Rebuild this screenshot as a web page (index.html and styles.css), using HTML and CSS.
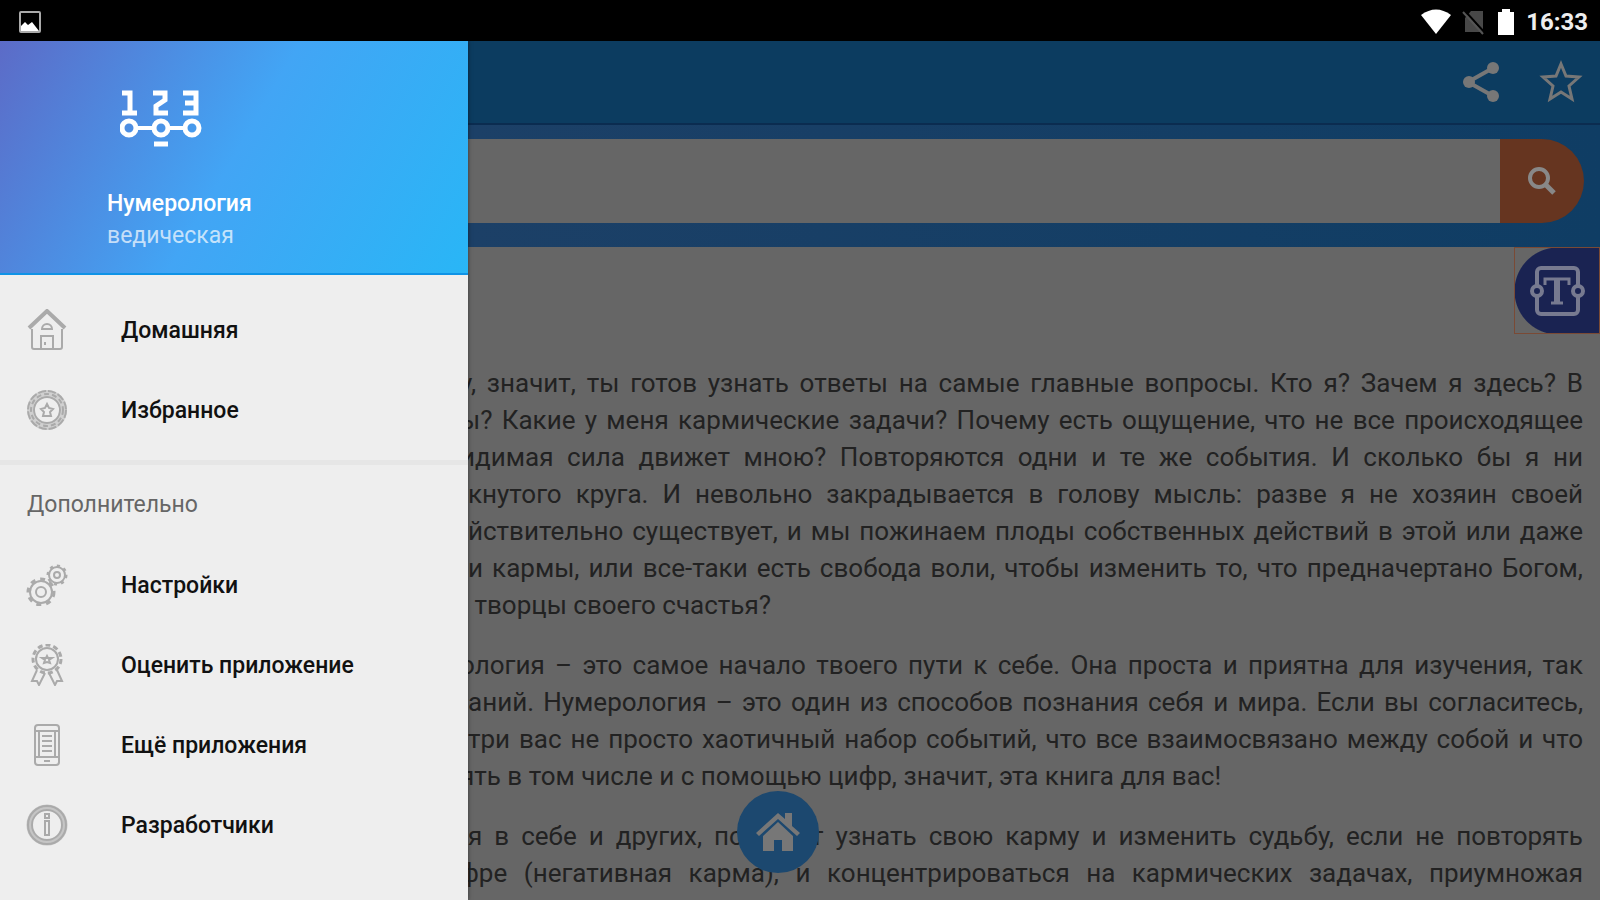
FILE: index.html
```
<!DOCTYPE html>
<html lang="ru">
<head>
    <meta charset="UTF-8">
    <meta name="viewport" content="width=device-width, initial-scale=1.0">
    <title>Нумерология ведическая</title>
    <link rel="stylesheet" href="styles.css">
</head>
<body>
    <div class="status-bar">
        <svg class="status-picture" viewBox="0 0 24 24" width="24" height="24">
            <rect x="2" y="2" width="20" height="20" rx="1" fill="none" stroke="#aaa" stroke-width="2"/>
            <path d="M3 21v-5l4-4 3 3 4-3 7 9z" fill="#fff"/>
        </svg>
        <div class="status-right">
            <svg viewBox="0 0 30 26" width="30" height="26">
                <path d="M0 6Q15-5 30 6L15 25z" fill="#fff"/>
            </svg>
            <svg viewBox="0 0 24 26" width="24" height="26">
                <path d="M9 2h12v21H3V9z" fill="#484848"/>
                <path d="M3 2l20 22" stroke="#000" stroke-width="2"/>
                <path d="M1 3l20 22" stroke="#555" stroke-width="2"/>
            </svg>
            <svg viewBox="0 0 18 26" width="18" height="26">
                <path d="M5 0h8v3h4v23H1V3h4z" fill="#fff"/>
            </svg>
            <span class="clock">16:33</span>
        </div>
    </div>

    <div class="screen">
        <aside class="drawer">
            <header class="drawer-header">
                <svg class="logo" viewBox="0 0 82 60" width="82" height="60">
                    <g fill="none" stroke="#fff" stroke-width="5">
                        <path d="M2 4h8v20M2 24h15"/>
                        <path d="M33 4h12v7l-9 6v7h12"/>
                        <path d="M63 4h13v20H63M65 14h11"/>
                        <circle cx="9" cy="39" r="7"/>
                        <circle cx="41" cy="39" r="7"/>
                        <circle cx="72" cy="39" r="7"/>
                    </g>
                    <path d="M16 39h18M48 39h18" stroke="#fff" stroke-width="4"/>
                    <path d="M34 55h14" stroke="#fff" stroke-width="5"/>
                </svg>
                <h1 class="drawer-title">Нумерология</h1>
                <p class="drawer-subtitle">ведическая</p>
            </header>

            <nav class="menu">
                <a class="menu-item" href="#home">
                    <svg class="menu-icon" viewBox="0 0 42 42">
                        <path d="M3 19L21 2l18 17" stroke-width="4"/>
                        <path d="M6 20v18q0 2 2 2h26q2 0 2-2V20M15 40V27h12v13M19 33v3"/>
                        <path d="M16 20a5 5 0 1 1 10 0z"/>
                    </svg>
                    <span>Домашняя</span>
                </a>
                <a class="menu-item" href="#favorites">
                    <svg class="menu-icon" viewBox="0 0 42 42">
                        <circle cx="21" cy="21" r="17" stroke-width="6" opacity=".45"/>
                        <circle cx="21" cy="21" r="19" stroke-dasharray="8 2"/>
                        <circle cx="21" cy="21" r="16" stroke-dasharray="5 3"/>
                        <circle cx="21" cy="21" r="13"/>
                        <path d="M21 15l2 4 4 1-3 3 1 4h-8l1-4-3-3 4-1z"/>
                    </svg>
                    <span>Избранное</span>
                </a>
            </nav>

            <nav class="menu menu-extra">
                <h2 class="menu-heading">Дополнительно</h2>
                <a class="menu-item" href="#settings">
                    <svg class="menu-icon" viewBox="0 0 42 42">
                        <circle cx="15" cy="28" r="11"/>
                        <circle cx="15" cy="28" r="13" stroke-width="3" stroke-dasharray="5 5"/>
                        <circle cx="15" cy="28" r="5"/>
                        <circle cx="31" cy="11" r="8"/>
                        <circle cx="31" cy="11" r="9" stroke-width="3" stroke-dasharray="3 4"/>
                        <circle cx="31" cy="11" r="3"/>
                    </svg>
                    <span>Настройки</span>
                </a>
                <a class="menu-item" href="#rate">
                    <svg class="menu-icon" viewBox="0 0 42 42">
                        <circle cx="21" cy="15" r="14" stroke-width="3" stroke-dasharray="5 3"/>
                        <circle cx="21" cy="15" r="11"/>
                        <path d="M21 12l1 2h4l-3 2 1 3-3-1-3 1 1-3-3-2h4z"/>
                        <path d="M11 26L6 37h5l2 4 6-12M31 26l5 11h-5l-2 4-6-12"/>
                    </svg>
                    <span>Оценить приложение</span>
                </a>
                <a class="menu-item" href="#more">
                    <svg class="menu-icon" viewBox="0 0 42 42">
                        <rect x="9" y="1" width="24" height="40" rx="3"/>
                        <path d="M9 7h24M9 33h24M13 7v26M29 7v26M16 12h10M16 17h10M16 22h10M16 27h10M18 37h6"/>
                    </svg>
                    <span>Ещё приложения</span>
                </a>
                <a class="menu-item" href="#developers">
                    <svg class="menu-icon" viewBox="0 0 42 42">
                        <circle cx="21" cy="21" r="18" stroke-width="5" opacity=".6"/>
                        <circle cx="21" cy="21" r="19"/>
                        <circle cx="21" cy="21" r="15"/>
                        <path d="M19 10h4v4h-4zM19 17h4v14h-4z"/>
                    </svg>
                    <span>Разработчики</span>
                </a>
            </nav>
        </aside>

        <main class="page">
            <div class="app-bar">
                <button class="icon-button" type="button" aria-label="Поделиться">
                    <svg viewBox="0 0 40 44" width="40" height="44">
                        <path d="M32 8L7 22l25 14" fill="none" stroke="#777" stroke-width="4"/>
                        <g fill="#777"><circle cx="32" cy="8" r="6"/><circle cx="8" cy="22" r="6"/><circle cx="32" cy="36" r="6"/></g>
                    </svg>
                </button>
                <button class="icon-button" type="button" aria-label="В избранное">
                    <svg viewBox="0 0 44 44" width="44" height="44">
                        <path d="M22 4l5 12 13 1-10 9 3 13-11-7-11 7 3-13L4 17l13-1z" fill="none" stroke="#777" stroke-width="3"/>
                    </svg>
                </button>
            </div>

            <form class="search">
                <input class="search-input" type="text" aria-label="Поиск">
                <button class="search-button" type="button" aria-label="Найти">
                    <svg viewBox="0 0 28 28" width="28" height="28">
                        <circle cx="11" cy="11" r="9" fill="none" stroke="#888" stroke-width="4"/>
                        <path d="M17 17l9 9" stroke="#888" stroke-width="5"/>
                    </svg>
                </button>
            </form>

            <article class="article">
                <p>
                    <span class="line cut">у, значит, ты готов узнать ответы на самые главные вопросы. Кто я? Зачем я здесь? В</span>
                    <span class="line cut">ы? Какие у меня кармические задачи? Почему есть ощущение, что не все происходящее</span>
                    <span class="line cut">идимая сила движет мною? Повторяются одни и те же события. И сколько бы я ни</span>
                    <span class="line">кнутого круга. И невольно закрадывается в голову мысль: разве я не хозяин своей</span>
                    <span class="line">йствительно существует, и мы пожинаем плоды собственных действий в этой или даже</span>
                    <span class="line">и кармы, или все-таки есть свобода воли, чтобы изменить то, что предначертано Богом,</span>
                    <span class="line last">&nbsp;творцы своего счастья?</span>
                </p>
                <p>
                    <span class="line cut">ология – это самое начало твоего пути к себе. Она проста и приятна для изучения, так</span>
                    <span class="line">аний. Нумерология – это один из способов познания себя и мира. Если вы согласитесь,</span>
                    <span class="line">три вас не просто хаотичный набор событий, что все взаимосвязано между собой и что</span>
                    <span class="line last cut">ять в том числе и с помощью цифр, значит, эта книга для вас!</span>
                </p>
                <p>
                    <span class="line">я в себе и других, поможет узнать свою карму и изменить судьбу, если не повторять</span>
                    <span class="line cut">фре (негативная карма), и концентрироваться на кармических задачах, приумножая</span>
                </p>
            </article>

            <button class="text-size" type="button" aria-label="Размер текста">
                <svg viewBox="0 0 56 52" width="56" height="52">
                    <rect x="8" y="3" width="41" height="46" rx="4" fill="none" stroke="#777a90" stroke-width="4"/>
                    <path d="M16 20v-6h24v6M22 38h12" fill="none" stroke="#777a90" stroke-width="3"/>
                    <path d="M28 13v25" stroke="#777a90" stroke-width="6"/>
                    <g fill="#1a2352" stroke="#777a90" stroke-width="4"><circle cx="8" cy="26" r="5"/><circle cx="49" cy="26" r="5"/></g>
                </svg>
            </button>

            <button class="home-button" type="button" aria-label="На главную">
                <svg viewBox="0 0 44 40" width="44" height="40">
                    <path d="M0 21L22 1l7 6V1h7v13l8 7-3 3L22 7 3 24z" fill="#777"/>
                    <path d="M7 24l15-14 15 14v15H26V28h-8v11H7z" fill="#777"/>
                </svg>
            </button>
        </main>
    </div>
</body>
</html>
```
FILE: styles.css
```
:root {
    --scrim-page: #666;
    --bar-blue: #0c3c60;
    --drawer-bg: #eee;
    --icon-gray: #aaa;
}

* {
    box-sizing: border-box;
    margin: 0;
    padding: 0;
}

body {
    height: 100vh;
    display: flex;
    flex-direction: column;
    overflow: hidden;
    font-family: Roboto, "Noto Sans", sans-serif;
    background-color: var(--scrim-page);
}

button {
    border: none;
    background: none;
    cursor: pointer;
}

svg {
    display: block;
}

/* status bar */
.status-bar {
    flex: none;
    height: 41px;
    padding: 2px 12px 0 18px;
    display: flex;
    align-items: center;
    justify-content: space-between;
    background-color: #000;
}

.status-right {
    display: flex;
    align-items: center;
    gap: 11px;
}

.clock {
    font-size: 24px;
    font-weight: 700;
    color: #eee;
}

.screen {
    flex: 1;
    min-height: 0;
    display: grid;
    grid-template-columns: 468px 1fr;
    grid-template-rows: minmax(0, 1fr);
}

/* drawer */
.drawer {
    z-index: 1;
    background-color: var(--drawer-bg);
    box-shadow: 0 0 4px rgba(0,0,0,0.5);
}

.drawer-header {
    height: 234px;
    padding: 48px 0 0 107px;
    color: white;
    background: linear-gradient(120deg, #5c6bc7 0%, #42a5f5 50%, #29b6f6 100%);
    border-bottom: 2px solid #0f93e6;
}

.logo {
    margin: 0 0 39px 13px;
}

.drawer-title,
.drawer-subtitle {
    font-size: 23px;
    line-height: 32px;
}

.drawer-title {
    font-weight: 500;
}

.drawer-subtitle {
    color: rgba(255,255,255,0.7);
}

.menu {
    padding: 15px 0 10px;
}

.menu-extra {
    padding: 0;
    border-top: 5px solid #e6e6e6;
}

.menu-heading {
    padding: 0 27px;
    font-size: 23px;
    font-weight: 400;
    line-height: 80px;
    color: #666;
}

.menu-item {
    height: 80px;
    padding: 0 26px;
    display: flex;
    align-items: center;
    gap: 53px;
    font-size: 23px;
    font-weight: 500;
    color: #111;
    text-decoration: none;
}

.menu-icon {
    width: 42px;
    height: 42px;
    fill: none;
    stroke: var(--icon-gray);
    stroke-width: 2;
}

/* page under the drawer */
.page {
    position: relative;
    min-width: 0;
}

.app-bar {
    height: 84px;
    padding: 0 17px;
    display: flex;
    align-items: center;
    justify-content: flex-end;
    gap: 38px;
    background-color: var(--bar-blue);
    border-bottom: 2px solid #0b2c50;
}

.search {
    height: 122px;
    padding: 14px 16px 24px 0;
    display: flex;
    background: linear-gradient(90deg, #1c4067, #0f3d64);
}

.search-input {
    flex: 1;
    min-width: 0;
    padding: 0 16px;
    border: none;
    font-size: 24px;
    background-color: var(--scrim-page);
}

.search-button {
    width: 84px;
    display: grid;
    place-items: center;
    background-color: #663520;
    border-radius: 0 42px 42px 0;
}

.article {
    padding: 118px 17px 0 0;
    font-size: 26px;
    line-height: 37px;
    color: #222;
}

.article p {
    margin-bottom: 23px;
}

.line {
    display: block;
    white-space: nowrap;
    text-align-last: justify;
}

/* lines whose first letter is half under the drawer */
.cut {
    margin-left: -8px;
}

.last {
    text-align-last: left;
}

.text-size {
    position: absolute;
    top: 206px;
    right: 0;
    width: 86px;
    height: 87px;
    display: grid;
    place-items: center;
    border: 1px solid #7a4a35;
    background: radial-gradient(circle at 43px 43px, #1a2352 43px, transparent 44px), linear-gradient(90deg, transparent 50%, #1a2352 50%);
}

.home-button {
    position: absolute;
    bottom: 27px;
    left: 269px;
    width: 82px;
    height: 82px;
    display: grid;
    place-items: center;
    background-color: #1c486f;
    border-radius: 50%;
}
```
